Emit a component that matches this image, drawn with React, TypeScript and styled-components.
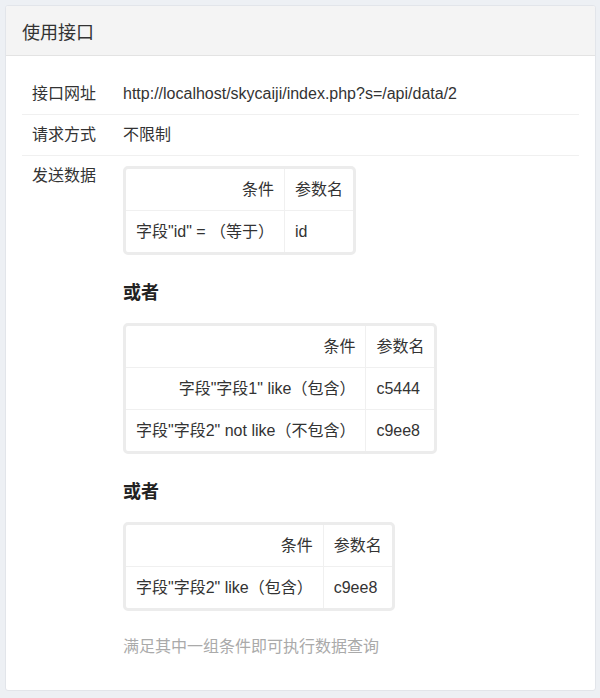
import React from "react";
import styled, { createGlobalStyle } from "styled-components";

const GlobalStyle = createGlobalStyle`
  body {
    margin: 0;
    background: #edf0f4;
    font-family: "Liberation Sans", "Noto Sans CJK SC", sans-serif;
    color: #333;
  }
`;

const Panel = styled.div`
  margin: 5px 4px 5px 5px;
  height: 686px;
  background: #fff;
  border: 1px solid #e2e5ea;
  border-radius: 3px;
  box-sizing: border-box;
  overflow: hidden;
`;

const PanelHeader = styled.div`
  height: 49px;
  display: flex;
  align-items: center;
  padding: 0 16px;
  background: #f4f4f4;
  border-bottom: 1px solid #e3e3e3;
  font-size: 18px;
  color: #333;
`;

const PanelBody = styled.div`
  padding: 18px 16px 0 16px;
`;

const Row = styled.div<{ $last?: boolean }>`
  display: flex;
  align-items: flex-start;
  border-bottom: ${(p) => (p.$last ? "none" : "1px solid #f0f0f0")};
`;

const Label = styled.div`
  width: 81px;
  flex-shrink: 0;
  padding: 8px 10px;
  font-size: 16px;
  line-height: 24px;
  color: #333;
`;

const Value = styled.div<{ $top?: number }>`
  flex: 1;
  padding: ${(p) => p.$top ?? 8}px 10px 8px 0;
  font-size: 16px;
  line-height: 24px;
  color: #333;
`;

const CondTable = styled.table`
  border-collapse: separate;
  border-spacing: 0;
  border: 3px solid #ececec;
  border-radius: 5px;
  font-size: 16px;
`;

const Cell = styled.td<{ $right?: boolean; $lastRow?: boolean }>`
  padding: 8px 10px;
  line-height: 25px;
  white-space: nowrap;
  text-align: ${(p) => (p.$right ? "right" : "left")};
  border-bottom: ${(p) => (p.$lastRow ? "none" : "1px solid #f0f0f0")};
  border-right: ${(p) => (p.$right ? "1px solid #f0f0f0" : "none")};
  color: #333;
`;

const OrHeading = styled.h4`
  margin: 25px 0 17px;
  font-size: 18px;
  line-height: 26px;
  font-weight: bold;
  color: #222;
`;

const HelpText = styled.p`
  margin: 24px 0 0;
  font-size: 16px;
  line-height: 24px;
  color: #aaa;
`;

type Cond = { cond: string; param: string };

const groups: Cond[][] = [
  [{ cond: '字段"id" = （等于）', param: "id" }],
  [
    { cond: '字段"字段1" like（包含）', param: "c5444" },
    { cond: '字段"字段2" not like（不包含）', param: "c9ee8" },
  ],
  [{ cond: '字段"字段2" like（包含）', param: "c9ee8" }],
];

function ConditionTable({ rows }: { rows: Cond[] }) {
  return (
    <CondTable>
      <tbody>
        <tr>
          <Cell $right>条件</Cell>
          <Cell>参数名</Cell>
        </tr>
        {rows.map((r, i) => (
          <tr key={i}>
            <Cell $right $lastRow={i === rows.length - 1}>
              {r.cond}
            </Cell>
            <Cell $lastRow={i === rows.length - 1}>{r.param}</Cell>
          </tr>
        ))}
      </tbody>
    </CondTable>
  );
}

export default function App() {
  return (
    <>
      <GlobalStyle />
      <Panel>
        <PanelHeader>使用接口</PanelHeader>
        <PanelBody>
          <Row>
            <Label>接口网址</Label>
            <Value>http://localhost/skycaiji/index.php?s=/api/data/2</Value>
          </Row>
          <Row>
            <Label>请求方式</Label>
            <Value>不限制</Value>
          </Row>
          <Row $last>
            <Label>发送数据</Label>
            <Value $top={10}>
              {groups.map((g, i) => (
                <React.Fragment key={i}>
                  {i > 0 && <OrHeading>或者</OrHeading>}
                  <ConditionTable rows={g} />
                </React.Fragment>
              ))}
              <HelpText>满足其中一组条件即可执行数据查询</HelpText>
            </Value>
          </Row>
        </PanelBody>
      </Panel>
    </>
  );
}
